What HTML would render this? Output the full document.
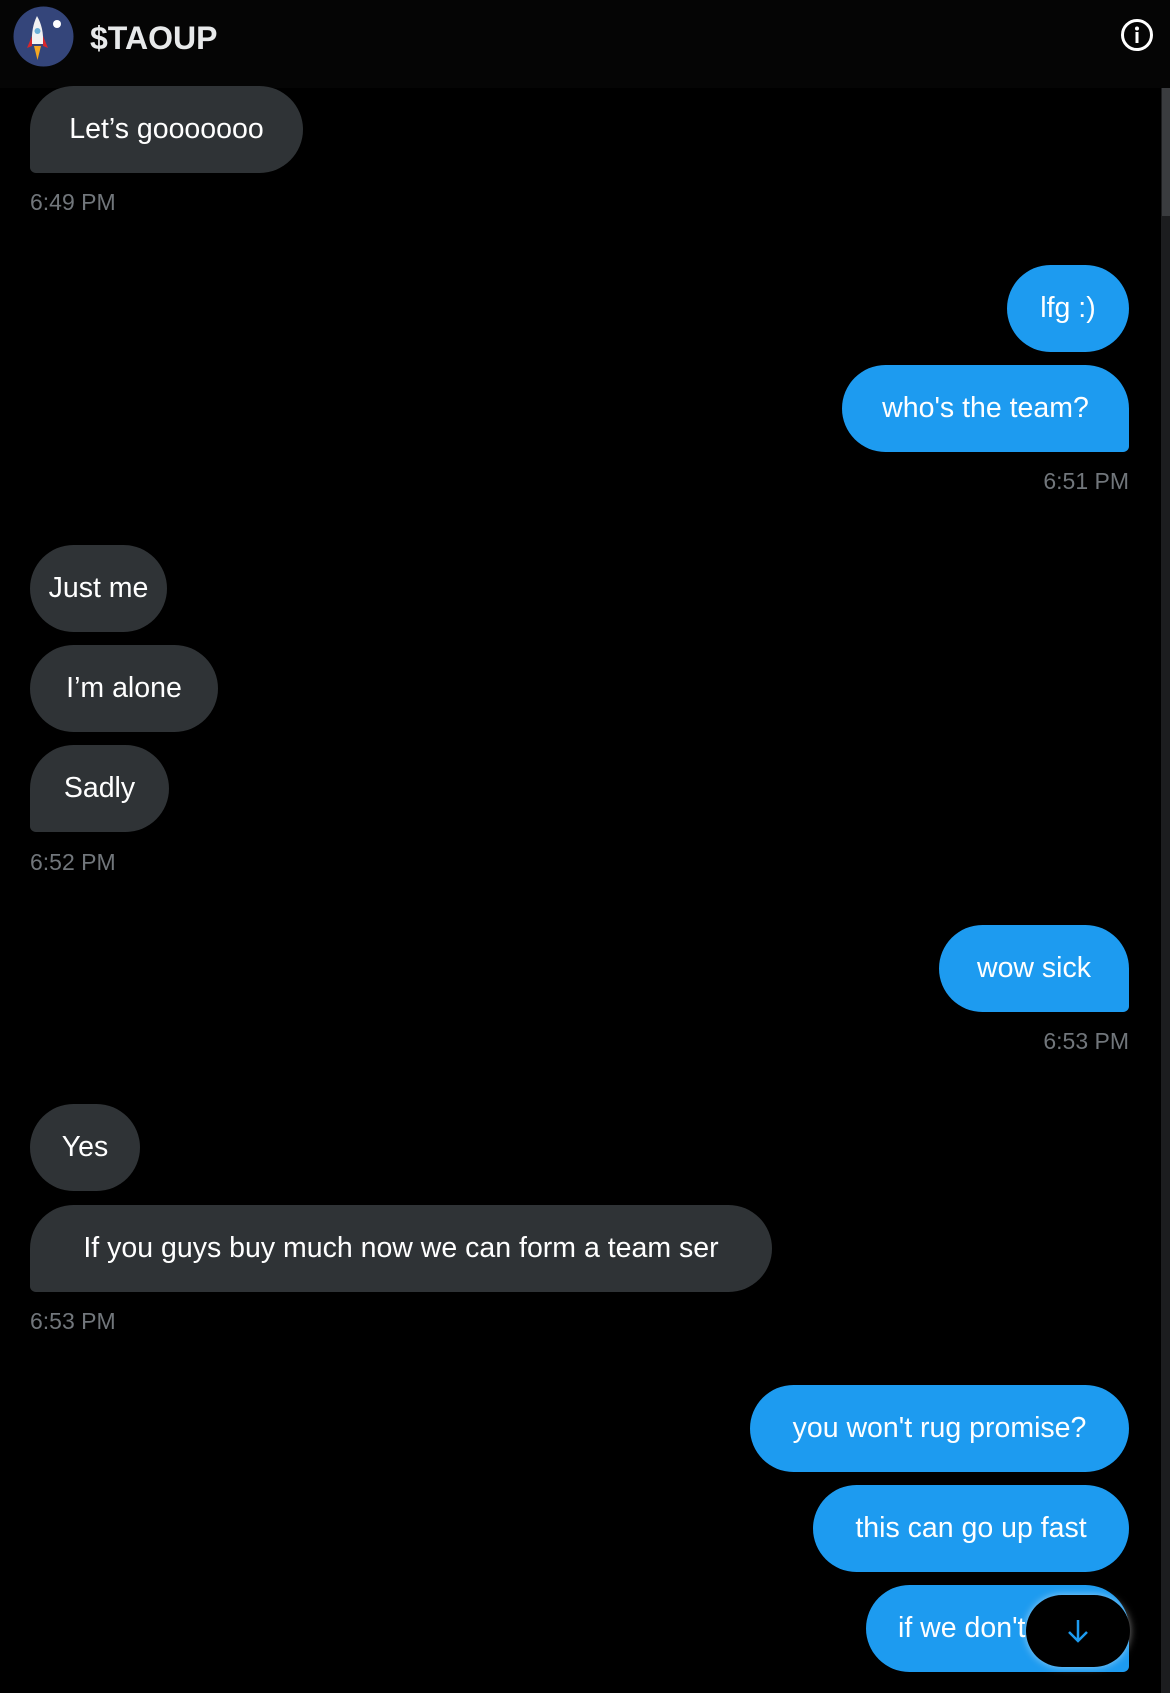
<!DOCTYPE html>
<html><head><meta charset="utf-8"><style>
body{margin:0;width:1170px;height:1693px;background:#000;overflow:hidden;font-family:"Liberation Sans",sans-serif;position:relative}
.hdr{position:absolute;left:0;top:0;width:1170px;height:88px;background:#050505}
.t{position:absolute;left:90px;top:18px;color:#e7e9ea;font-weight:bold;font-size:32px}
.b{position:absolute;height:87px;line-height:87px;font-size:28.5px;color:#fff;padding:0;box-sizing:border-box;border-radius:44px;white-space:nowrap;text-align:center}
.r{background:#2f3336;left:30px}
.s{background:#1d9bf0;right:41px}
.ts{position:absolute;color:#71767b;font-size:23px}
.tl{left:30px}.tr{right:41px}
.bl{border-bottom-left-radius:6px}.br{border-bottom-right-radius:6px}
.sb{position:absolute;right:0;top:88px;width:9px;height:1605px;background:#1c1d1f}
.th{position:absolute;right:0;top:88px;width:8px;height:128px;background:#3a3c3f}
</style></head><body>
<div class="hdr"></div>
<svg style="position:absolute;left:13px;top:6px" width="61" height="61" viewBox="0 0 61 61">
<circle cx="30.5" cy="30.5" r="30" fill="#34457a"/>
<circle cx="44" cy="18" r="4" fill="#fff"/>
<path d="M24 10 Q18 22 19 38 L30 38 Q31 22 24 10Z" fill="#f2f2f2"/>
<path d="M19 30 L14 42 L19 40Z M30 30 L35 42 L30 40Z" fill="#d8262b"/>
<circle cx="24.5" cy="25" r="3" fill="#6ab0d8"/>
<path d="M21 40 L24.5 54 L28 40Z" fill="#f6a821"/>
</svg>
<div class="t" style="top:20px">$TAOUP</div>
<svg style="position:absolute;left:1120px;top:18px" width="34" height="34" viewBox="0 0 34 34"><circle cx="17" cy="17" r="14.5" fill="none" stroke="#fff" stroke-width="3"/><circle cx="17" cy="10.5" r="2" fill="#fff"/><rect x="15.5" y="14" width="3" height="11" fill="#fff"/></svg>
<div class="sb"></div><div class="th"></div>

<div class="b r bl" style="top:86px;width:273px">Let’s gooooooo</div>
<div class="ts tl" style="top:189px">6:49 PM</div>

<div class="b s" style="top:265px;width:122px">lfg :)</div>
<div class="b s br" style="top:365px;width:287px">who's the team?</div>
<div class="ts tr" style="top:468px">6:51 PM</div>

<div class="b r" style="top:545px;width:137px">Just me</div>
<div class="b r" style="top:645px;width:188px">I’m alone</div>
<div class="b r bl" style="top:745px;width:139px">Sadly</div>
<div class="ts tl" style="top:849px">6:52 PM</div>

<div class="b s br" style="top:925px;width:190px">wow sick</div>
<div class="ts tr" style="top:1028px">6:53 PM</div>

<div class="b r" style="top:1104px;width:110px">Yes</div>
<div class="b r bl" style="top:1205px;width:742px">If you guys buy much now we can form a team ser</div>
<div class="ts tl" style="top:1308px">6:53 PM</div>

<div class="b s" style="top:1385px;width:379px">you won't rug promise?</div>
<div class="b s" style="top:1485px;width:316px">this can go up fast</div>
<div class="b s br" style="top:1585px;width:263px;text-align:left;padding-left:32px">if we don't</div>
<div style="position:absolute;left:1026px;top:1595px;width:104px;height:72px;border-radius:36px;background:#000;box-shadow:0 0 8px rgba(255,255,255,.5)"></div>
<svg style="position:absolute;left:1064px;top:1617px" width="28" height="28" viewBox="0 0 28 28"><path d="M14 3V24M5 15L14 24L23 15" fill="none" stroke="#1d9bf0" stroke-width="2.5"/></svg>
</body></html>
